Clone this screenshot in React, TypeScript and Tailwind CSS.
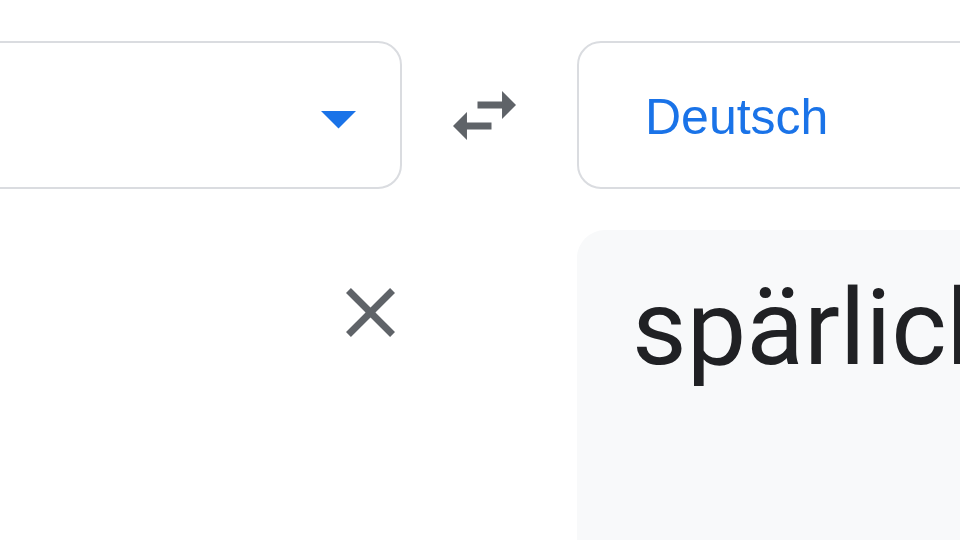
import React from 'react';

function DropArrow() {
    return (
        <svg width="35" height="17.5" viewBox="7 10 10 5" className="block">
            <path d="M7 10l5 5 5-5z" fill="#1a73e8" />
        </svg>
    );
}

function SwapIcon() {
    return (
        <svg width="63" height="49" viewBox="3 5 18 14" className="block">
            <path
                d="M6.99 11L3 15l3.99 4v-3H14v-2H6.99v-3zM21 9l-3.99-4v3H10v2h7.01v3L21 9z"
                fill="#5f6368"
            />
        </svg>
    );
}

function CloseIcon() {
    return (
        <svg width="49" height="49" viewBox="5 5 14 14" className="block">
            <path
                d="M19 6.41L17.59 5 12 10.59 6.41 5 5 6.41 10.59 12 5 17.59 6.41 19 12 13.41 17.59 19 19 17.59 13.41 12z"
                fill="#5f6368"
            />
        </svg>
    );
}

export default function App() {
    return (
        <div className="w-[960px] h-[540px] overflow-hidden bg-white pt-[41px]">
            <div className="flex items-start">
                {/* source side */}
                <div className="-ml-[40px] w-[442px] shrink-0 flex flex-col">
                    <div className="h-[148px] border-2 border-[#dadce0] rounded-[24px] flex items-start justify-end pr-[44px] pt-[68px]">
                        <DropArrow />
                    </div>
                    <div className="self-end mr-[7px] mt-[99px]">
                        <CloseIcon />
                    </div>
                </div>

                {/* swap */}
                <div className="w-[175px] shrink-0 h-[148px] flex items-center pl-[51px]">
                    <SwapIcon />
                </div>

                {/* target side */}
                <div className="w-[440px] shrink-0 flex flex-col">
                    <div className="h-[148px] border-2 border-[#dadce0] rounded-[24px] flex items-start pl-[66px] pt-[49px]">
                        <span
                            className="text-[50px] leading-none text-[#1a73e8]"
                            style={{ fontFamily: '"Liberation Sans", Arial, sans-serif' }}
                        >
                            Deutsch
                        </span>
                    </div>
                    <div className="mt-[41px] h-[400px] bg-[#f8f9fa] rounded-tl-[28px] pl-[55px] pt-[45px] overflow-hidden">
                        <div
                            className="text-[106px] leading-none text-[#202124] whitespace-nowrap"
                            style={{ fontFamily: 'Roboto, "Noto Sans", sans-serif' }}
                        >
                            spärlich
                        </div>
                    </div>
                </div>
            </div>
        </div>
    );
}
